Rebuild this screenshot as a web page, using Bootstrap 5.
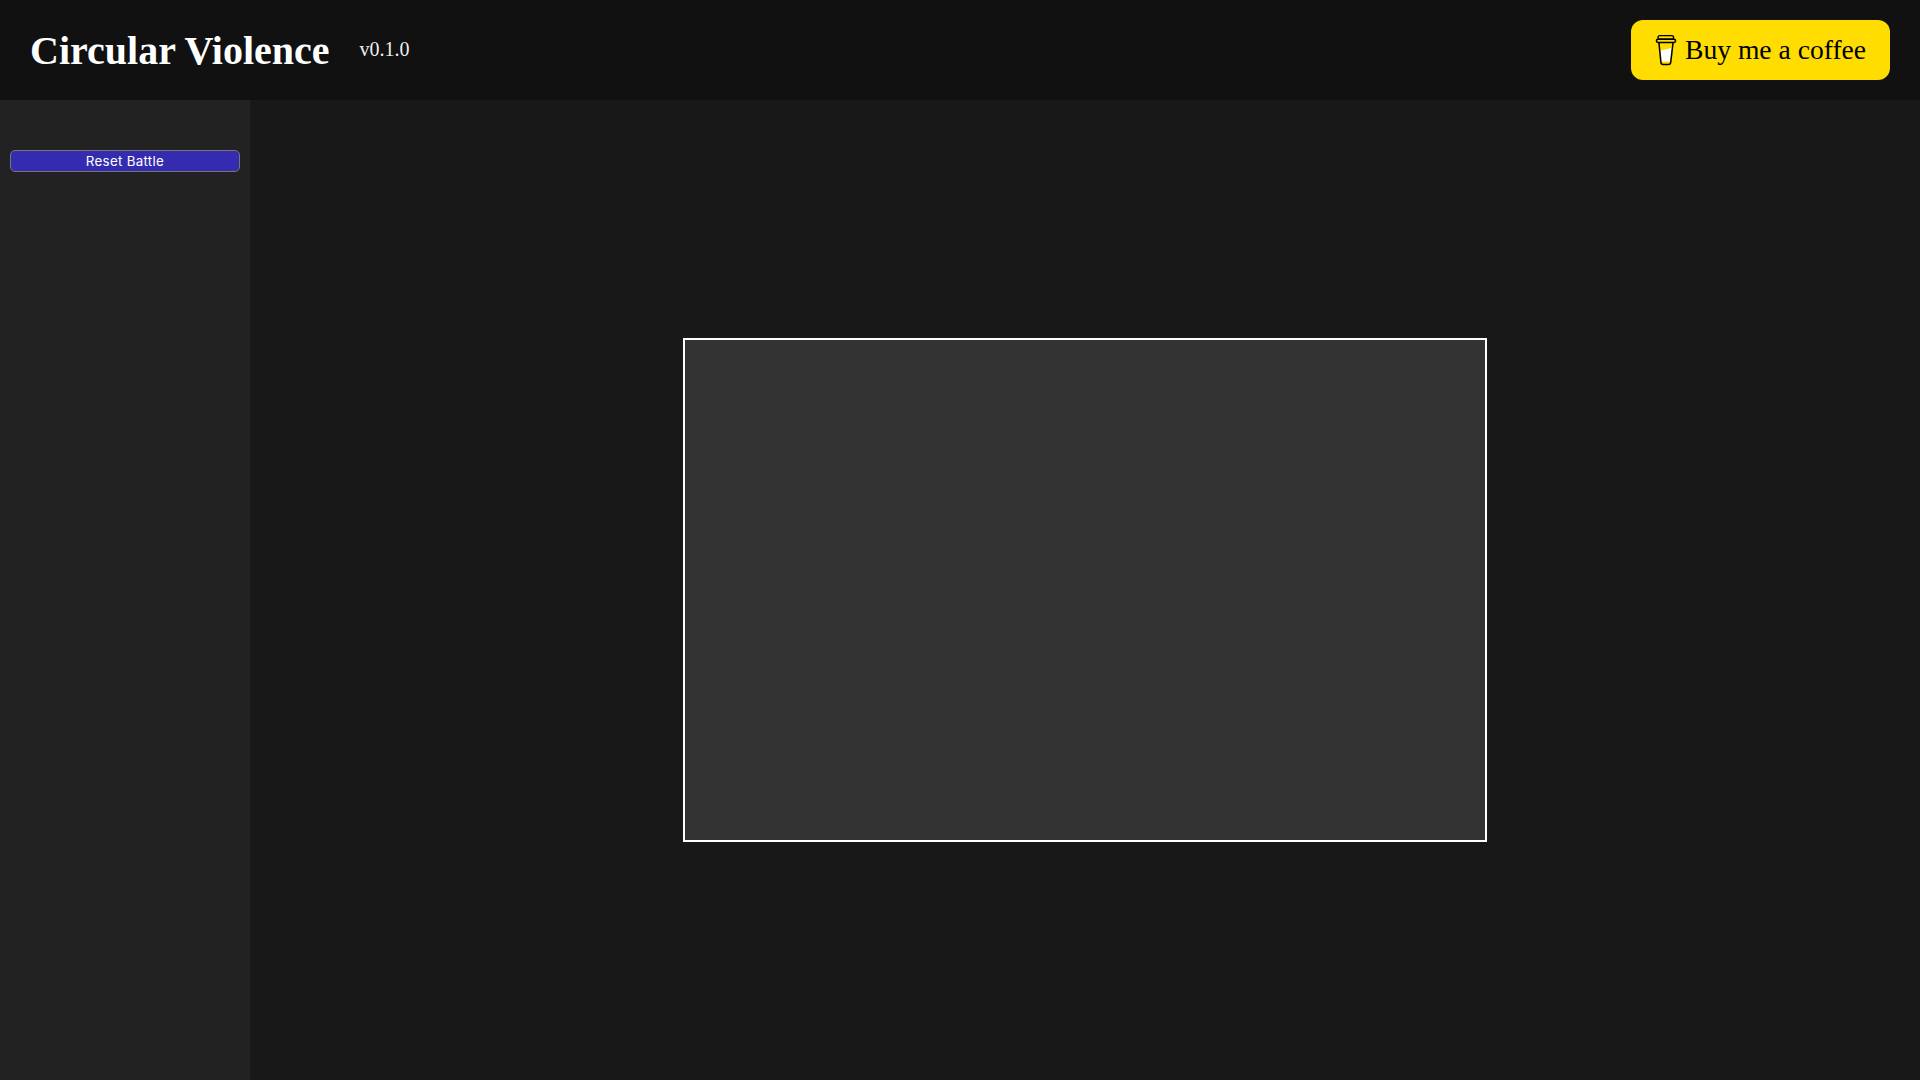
<!DOCTYPE html>
<html lang="en">
<head>
<meta charset="utf-8">
<title>Circular Violence</title>
<link href="https://cdn.jsdelivr.net/npm/bootstrap@5.3.0/dist/css/bootstrap.min.css" rel="stylesheet">
<style>
html, body { height: 100%; }
body { background: #181818; font-family: "Liberation Serif", serif; color: #fff; overflow: hidden; }
.app-top { height: 100px; background: #111; padding: 0 30px; }
.app-title { font-family: "Liberation Serif", serif; font-size: 40px; font-weight: 700; line-height: 46px; margin: 0; padding-top: 2px; color: #fff; }
.app-ver { font-size: 20px; line-height: 23px; margin-left: 30px; padding-bottom: 2px; color: #eee; }
.coffee-btn { width: 259px; height: 60px; padding: 0 24px; background: #ffdd00; color: #000; border-radius: 12px; font-size: 27.6px; text-decoration: none; gap: 8px; }
.coffee-btn:hover { background: #ffdd00; color: #000; }
.coffee-icon { width: 22px; height: 32px; flex-shrink: 0; }
.app-body { height: 980px; }
.app-side { width: 250px; background: #222; padding: 50px 10px 10px; }
.reset-btn { width: 230px; height: 22px; padding: 0; background: #352bb0; border: 1px solid #777; border-radius: 5px; color: #fff; font-family: Inter, sans-serif; font-size: 13.33px; letter-spacing: .3px; line-height: 20px; }
.reset-btn:hover { background: #352bb0; color: #fff; border-color: #777; }
.battle-box { width: 804px; height: 504px; background: #333; border: 2px solid #fff; }
</style>
</head>
<body>
<header class="app-top d-flex align-items-center justify-content-between">
  <div class="d-flex align-items-center">
    <h1 class="app-title">Circular Violence</h1>
    <span class="app-ver">v0.1.0</span>
  </div>
  <a class="coffee-btn d-flex align-items-center text-nowrap" href="#">
    <svg class="coffee-icon" viewBox="0 0 22 32" fill="none">
      <path d="M5.2 16 C9 16.4 13.5 15 16.8 13.6 L15.2 27.6 H6.8 Z" fill="#fff"/>
      <path d="M3.9 8.4 5.9 28.4 Q6.1 30.4 8 30.4 H13.6 Q15.5 30.4 15.7 28.4 L18.1 8.4" stroke="#000" stroke-width="1.5" stroke-linejoin="round"/>
      <rect x="3" y="1.6" width="15.6" height="3.6" rx="1.8" stroke="#000" stroke-width="1.4"/>
      <rect x="1.5" y="5.2" width="19" height="3.2" rx="1.4" stroke="#000" stroke-width="1.5"/>
    </svg>
    <span>Buy me a coffee</span>
  </a>
</header>
<div class="app-body d-flex">
  <aside class="app-side flex-shrink-0">
    <button type="button" class="btn reset-btn d-block">Reset Battle</button>
  </aside>
  <main class="flex-grow-1 d-flex align-items-center justify-content-center">
    <div class="battle-box"></div>
  </main>
</div>
<script src="https://cdn.jsdelivr.net/npm/bootstrap@5.3.0/dist/js/bootstrap.bundle.min.js"></script>
</body>
</html>
